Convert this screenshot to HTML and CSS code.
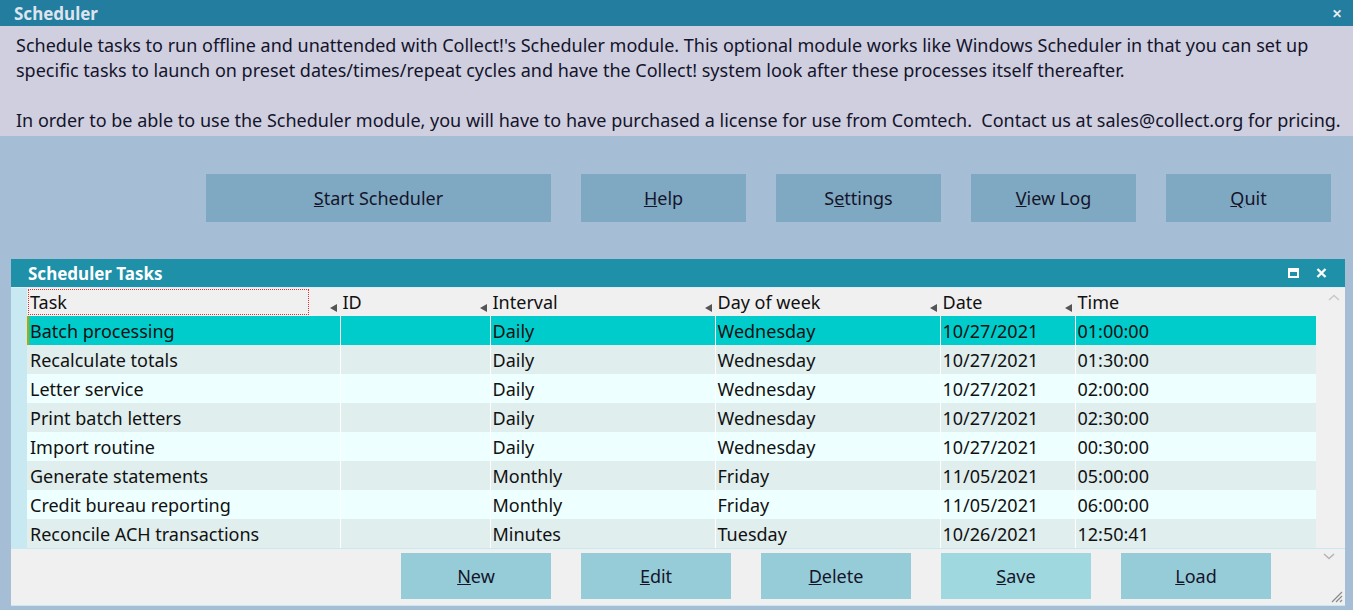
FILE: index.html
```html
<!DOCTYPE html>
<html lang="en">
<head>
  <meta charset="UTF-8" />
  <title>Scheduler</title>
  <link rel="stylesheet" href="styles.css">
</head>
<body>
  <div class="titlebar">
    <span class="title">Scheduler</span>
    <span class="close">&#x2715;</span>
  </div>

  <div class="intro">
    <p>Schedule tasks to run offline and unattended with Collect!'s Scheduler module. This optional module works like Windows Scheduler in that you can set up specific tasks to launch on preset dates/times/repeat cycles and have the Collect! system look after these processes itself thereafter.</p>
    <p>In order to be able to use the Scheduler module, you will have to have purchased a license for use from Comtech.&nbsp; Contact us at sales@collect.org for pricing.</p>
  </div>

  <div class="actions">
    <button class="wide"><u>S</u>tart Scheduler</button>
    <button><u>H</u>elp</button>
    <button>S<u>e</u>ttings</button>
    <button><u>V</u>iew Log</button>
    <button><u>Q</u>uit</button>
  </div>

  <div class="panel">
    <div class="panel-title">
      <span>Scheduler Tasks</span>
      <span class="panel-icons">
        <svg width="11" height="10" viewBox="0 0 11 10"><rect x="1" y="1" width="9" height="8" fill="none" stroke="#fff" stroke-width="2"/><rect x="1" y="1" width="9" height="3" fill="#fff"/></svg>
        <svg width="11" height="10" viewBox="0 0 11 10"><path d="M1.5 1 L9.5 9 M9.5 1 L1.5 9" stroke="#fff" stroke-width="2.4"/></svg>
      </span>
    </div>

    <div class="grid-wrap">
      <div class="strip"></div>
      <table class="grid">
        <colgroup>
          <col class="c-task"><col class="c-id"><col class="c-wide"><col class="c-wide"><col class="c-date"><col>
        </colgroup>
        <thead>
          <tr>
            <th><span class="focus">Task</span><i class="sort"></i></th>
            <th>ID<i class="sort"></i></th>
            <th>Interval<i class="sort"></i></th>
            <th>Day of week<i class="sort"></i></th>
            <th>Date<i class="sort"></i></th>
            <th>Time</th>
          </tr>
        </thead>
        <tbody>
          <tr class="selected"><td>Batch processing</td><td></td><td>Daily</td><td>Wednesday</td><td>10/27/2021</td><td>01:00:00</td></tr>
          <tr><td>Recalculate totals</td><td></td><td>Daily</td><td>Wednesday</td><td>10/27/2021</td><td>01:30:00</td></tr>
          <tr><td>Letter service</td><td></td><td>Daily</td><td>Wednesday</td><td>10/27/2021</td><td>02:00:00</td></tr>
          <tr><td>Print batch letters</td><td></td><td>Daily</td><td>Wednesday</td><td>10/27/2021</td><td>02:30:00</td></tr>
          <tr><td>Import routine</td><td></td><td>Daily</td><td>Wednesday</td><td>10/27/2021</td><td>00:30:00</td></tr>
          <tr><td>Generate statements</td><td></td><td>Monthly</td><td>Friday</td><td>11/05/2021</td><td>05:00:00</td></tr>
          <tr><td>Credit bureau reporting</td><td></td><td>Monthly</td><td>Friday</td><td>11/05/2021</td><td>06:00:00</td></tr>
          <tr><td>Reconcile ACH transactions</td><td></td><td>Minutes</td><td>Tuesday</td><td>10/26/2021</td><td>12:50:41</td></tr>
        </tbody>
      </table>
      <div class="scroll">
        <svg width="12" height="7" viewBox="0 0 12 7"><path d="M1 6 L6 1.5 L11 6" fill="none" stroke="#c8c8c8" stroke-width="1.5"/></svg>
      </div>
    </div>

    <div class="footer">
      <div class="footer-buttons">
        <button><u>N</u>ew</button>
        <button><u>E</u>dit</button>
        <button><u>D</u>elete</button>
        <button class="save"><u>S</u>ave</button>
        <button><u>L</u>oad</button>
      </div>
      <div class="footer-side">
        <svg width="12" height="7" viewBox="0 0 12 7"><path d="M1 1 L6 5.5 L11 1" fill="none" stroke="#b4b4b4" stroke-width="1.5"/></svg>
        <svg class="grip" width="12" height="12" viewBox="0 0 12 12"><path d="M11 1 L1 11 M11 5 L5 11 M11 9 L9 11" stroke="#8a8a8a" stroke-width="1.2"/></svg>
      </div>
    </div>
  </div>
</body>
</html>
```

FILE: styles.css
```css
/* Scheduler window */
body {
  margin: 0;
  background-color: #a5bed6;
  font-family: "Noto Sans", "Open Sans", sans-serif;
  color: #111;
  height: 610px;
  overflow: hidden;
}

.titlebar {
  height: 26px;
  background: #237d9e;
  display: flex;
  justify-content: space-between;
  align-items: center;
  padding: 0 11px 0 14px;
}

.title {
  color: #dde4ee;
  font-weight: bold;
  font-size: 17px;
}

.close {
  color: #e8eef4;
  font-size: 12px;
  font-weight: bold;
}

.intro {
  background: #cfcfe0;
  height: 110px;
  box-sizing: border-box;
  padding: 7px 10px 0 16px;
  font-size: 18px;
  line-height: 25px;
  color: #14142a;
}

.intro p {
  margin: 0 0 25px 0;
}

.intro p:last-child {
  margin: 0;
}

/* Top buttons */
.actions {
  display: flex;
  justify-content: flex-end;
  gap: 30px;
  padding: 38px 22px 0 0;
  height: 123px;
  box-sizing: border-box;
}

button {
  font-family: inherit;
  font-size: 18px;
  color: #15152a;
  border: none;
  cursor: pointer;
}

.actions button {
  width: 165px;
  height: 48px;
  background: #7fa9c3;
}

.actions button.wide {
  width: 345px;
}

/* Tasks panel */
.panel {
  margin: 0 8px 0 11px;
  background: #f0f0f0;
  border-bottom: 1px solid #c8e8f2;
}

.panel-title {
  height: 28px;
  background: #1e90a8;
  color: #fff;
  font-weight: bold;
  font-size: 17px;
  display: flex;
  justify-content: space-between;
  align-items: center;
  padding: 0 18px 0 17px;
}

.panel-icons {
  display: flex;
  gap: 17px;
}

.grid-wrap {
  display: flex;
  border-top: 1px solid #d8eef4;
}

.strip {
  width: 16px;
  background: #c8e8f2;
}

.grid {
  border-collapse: collapse;
  width: 1289px;
  table-layout: fixed;
  font-size: 18px;
}

.c-task { width: 313px; }
.c-id { width: 150px; }
.c-wide { width: 225px; }
.c-date { width: 135px; }

.grid th,
.grid td {
  height: 29px;
  padding: 0 0 0 2px;
  text-align: left;
  white-space: nowrap;
  border-right: 1px solid #fff;
}

.grid th:first-child,
.grid td:first-child {
  padding-left: 3px;
}

.grid th {
  position: relative;
  height: 28px;
  background: #f0f0f0;
  font-weight: normal;
  border-right-color: #f0f0f0;
}

.grid td:last-child,
.grid th:last-child {
  border-right: none;
}

.focus {
  display: block;
  width: 278px;
  height: 24px;
  line-height: 24px;
  margin-left: -2px;
  padding-left: 1px;
  border: 1px dotted #e03030;
}

.sort {
  position: absolute;
  right: 3px;
  bottom: 4px;
  width: 0;
  height: 0;
  border-top: 4px solid transparent;
  border-bottom: 4px solid transparent;
  border-right: 7px solid #555;
}

.grid tbody tr:nth-child(even) { background: #e0eeee; }
.grid tbody tr:nth-child(odd) { background: #eeffff; }
.grid tbody tr.selected { background: #00cccc; }

.grid tbody tr.selected td:first-child {
  box-shadow: inset 2px 0 0 #b0a800;
}

.scroll {
  flex: 1;
  display: flex;
  justify-content: center;
  padding-top: 6px;
}

.scroll svg {
  margin-left: 6px;
}

/* Footer buttons */
.footer {
  display: flex;
  height: 56px;
  border-top: 1px solid #c8e8f2;
}

.footer-buttons {
  display: flex;
  gap: 30px;
  padding: 4px 0 0 390px;
}

.footer-buttons button {
  width: 150px;
  height: 46px;
  background: #96ccd8;
}

.footer-buttons button.save {
  background: #a0d8e0;
}

.footer-side {
  flex: 1;
  display: flex;
  flex-direction: column;
  align-items: flex-end;
  justify-content: space-between;
  padding: 4px 2px 2px 0;
}

.footer-side svg:first-child {
  margin-right: 8px;
}
```
